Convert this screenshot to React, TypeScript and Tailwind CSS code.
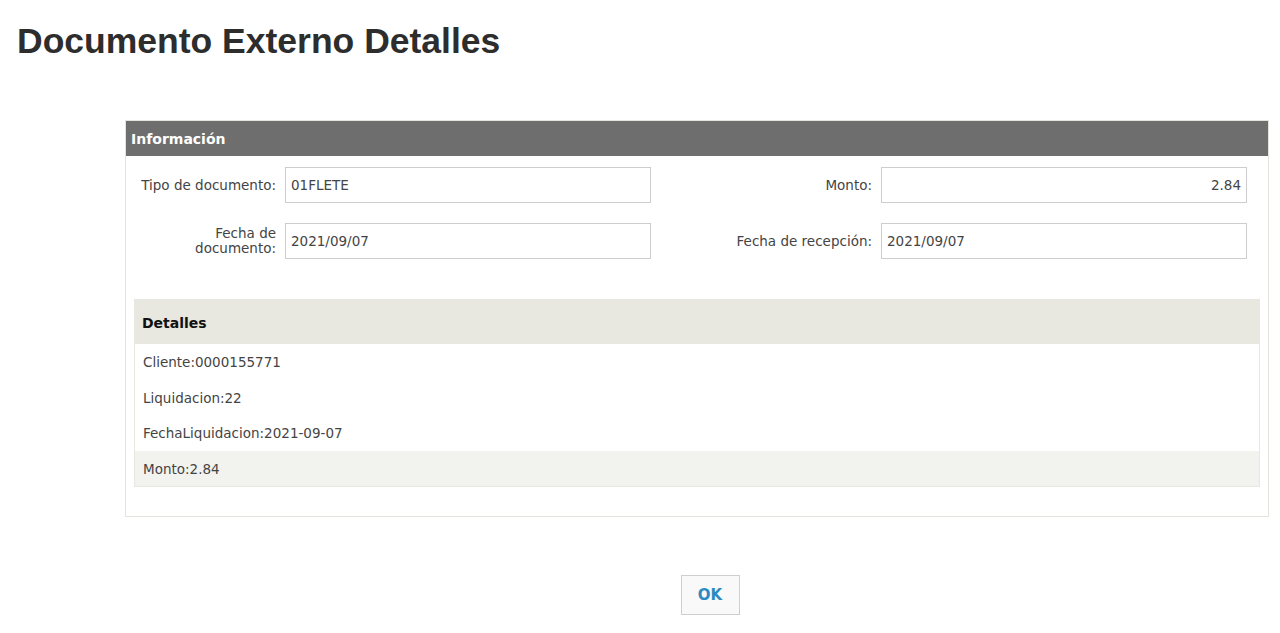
export default function App() {
  return (
    <div className="min-h-[633px] w-full bg-white text-[#333]">
      <h1 className="pl-[17px] pt-[20px] font-['Liberation_Sans',Arial,sans-serif] text-[35.5px] font-bold leading-[42px] text-[#2d2d2d]">
        Documento Externo Detalles
      </h1>

      <div className="ml-[125px] mr-[11px] mt-[58px] border border-[#e4e4de] font-['DejaVu_Sans',Verdana,sans-serif] text-[13.5px]">
        <div className="h-[35px] bg-[#6e6e6e] px-[5px] text-[14px] font-bold leading-[36px] text-white">
          Información
        </div>

        <div className="grid grid-cols-2 pt-[11px]">
          <Field labelW="w-[159px]" label="Tipo de documento:" value="01FLETE" />
          <Field labelW="w-[184px]" label="Monto:" value="2.84" right />
        </div>
        <div className="grid grid-cols-2 pt-[20px]">
          <Field
            labelW="w-[159px]"
            label={
              <>
                Fecha de
                <br />
                documento:
              </>
            }
            value="2021/09/07"
            twoLine
          />
          <Field labelW="w-[184px]" label="Fecha de recepción:" value="2021/09/07" />
        </div>

        <div className="mx-[8px] mb-[29px] mt-[40px] border border-[#e8e8e2]">
          <div className="h-[44px] bg-[#e8e7e0] pl-[7px] text-[14px] font-bold leading-[46px] text-[#111]">
            Detalles
          </div>
          <div className="bg-white">
            <Row text="Cliente:0000155771" />
            <Row text="Liquidacion:22" />
            <Row text="FechaLiquidacion:2021-09-07" />
          </div>
          <div className="bg-[#f2f2ee]">
            <Row text="Monto:2.84" />
          </div>
        </div>
      </div>

      <div className="flex justify-center pl-[140px] pt-[58px]">
        <button className="h-[40px] w-[59px] border border-[#cfcfcf] bg-[#f9f9f9] font-['DejaVu_Sans',Verdana,sans-serif] text-[15px] font-bold text-[#2c8ac2]">
          OK
        </button>
      </div>
    </div>
  );
}

function Field({
  label,
  labelW,
  value,
  right,
  twoLine,
}: {
  label: React.ReactNode;
  labelW: string;
  value: string;
  right?: boolean;
  twoLine?: boolean;
}) {
  return (
    <div className="flex items-center">
      <div
        className={`${labelW} shrink-0 pr-[9px] text-right text-[#444] ${
          twoLine ? "leading-[15px]" : ""
        }`}
      >
        {label}
      </div>
      <div
        className={`h-[36px] w-[366px] border border-[#cdcdcd] bg-white px-[5px] leading-[34px] text-[#444] ${
          right ? "text-right" : ""
        }`}
      >
        {value}
      </div>
    </div>
  );
}

function Row({ text }: { text: string }) {
  return (
    <div className="h-[35.5px] pl-[8px] leading-[36px] text-[#444]">{text}</div>
  );
}
